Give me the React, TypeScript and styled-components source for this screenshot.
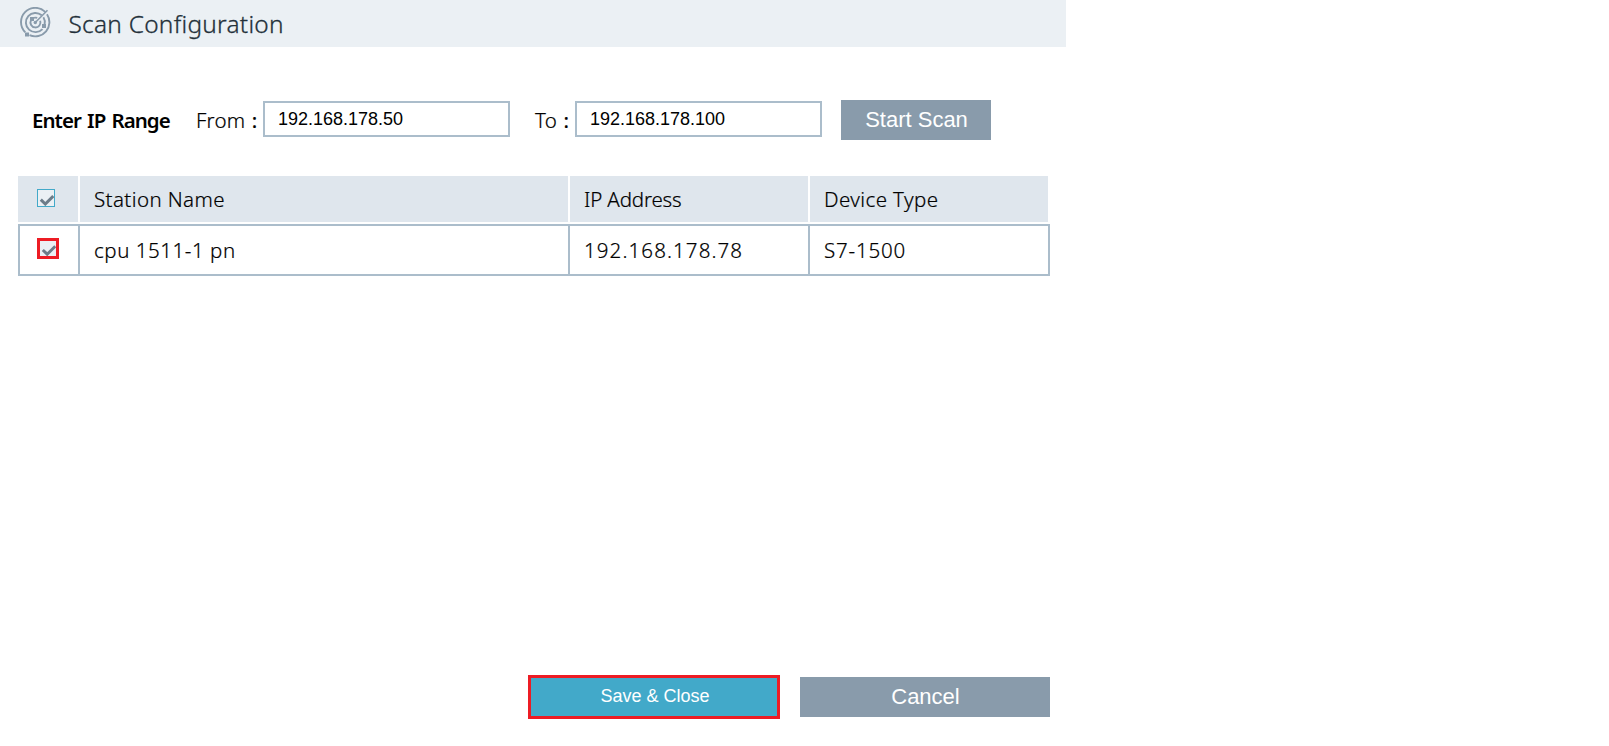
import React from "react";
import styled, { createGlobalStyle, css } from "styled-components";

const GlobalStyle = createGlobalStyle`
  * { box-sizing: border-box; }
  body { margin: 0; background: #fff; font-family: "Noto Sans", "Open Sans", sans-serif; color: #000; }
`;

const Dialog = styled.main`
  width: 1066px;
  height: 746px;
  display: flex;
  flex-direction: column;
`;

const Header = styled.header`
  height: 47px;
  flex: none;
  display: flex;
  align-items: center;
  padding: 0 0 2px 20px;
  gap: 17px;
  background: #ebf0f4;
`;

const Title = styled.h1`
  margin: 0;
  padding: 3px 0 0 0.5px;
  font-size: 24.4px;
  line-height: 34px;
  font-weight: 300;
  -webkit-text-stroke: 0.3px;
  letter-spacing: 0.27px;
  color: #23303a;
  white-space: nowrap;
`;

const RangeForm = styled.form`
  height: 40px;
  flex: none;
  margin-top: 53px;
  padding-left: 32px;
  display: flex;
  align-items: center;
`;

const RangeTitle = styled.strong`
  width: 164px;
  padding-bottom: 1px;
  font-size: 20.5px;
  line-height: 28px;
  font-weight: 600;
  letter-spacing: -0.95px;
  word-spacing: 1.7px;
  white-space: nowrap;
`;

const RangeLabel = styled.label<{ $width: number }>`
  width: ${(p) => p.$width}px;
  padding-bottom: 1px;
  font-size: 20.5px;
  line-height: 28px;
  font-weight: 300;
  -webkit-text-stroke: 0.2px;
  letter-spacing: 0.2px;
  white-space: nowrap;
`;

const Colon = styled.span`
  margin-left: 1px;
  font-weight: 400;
`;

const AddressInput = styled.input<{ $gap: number }>`
  width: 247px;
  height: 36px;
  flex: none;
  margin: 0 ${(p) => p.$gap}px 2px 0;
  padding: 0 13px;
  border: 2px solid #abbdcb;
  border-radius: 0;
  outline: none;
  background: #fff;
  color: #000;
  font: 18px "Liberation Sans", Arial, sans-serif;
`;

const Button = styled.button<{ $width: number; $primary?: boolean }>`
  width: ${(p) => p.$width}px;
  height: 40px;
  border: 0;
  padding: 0 0 0 1px;
  background: #899bab;
  color: #fff;
  font: 22px "Liberation Sans", Arial, sans-serif;
  ${(p) =>
    p.$primary &&
    css`
      height: 44px;
      border: 3px solid #ed1c24;
      background: #42a9c9;
      font-size: 18px;
      padding: 0 0 2px 2px;
    `}
`;

const Table = styled.div`
  margin: 36px 0 0 18px;
  width: 1032px;
`;

const HeadRow = styled.div`
  display: grid;
  grid-template-columns: 60px 488px 238px 238px;
  gap: 2px;
  height: 46px;
  margin-bottom: 2px;
`;

const BodyRow = styled.div`
  display: grid;
  grid-template-columns: 58px 488px 238px 238px;
  gap: 2px;
  height: 52px;
  padding: 2px;
  background: #abbdcb;
`;

const cell = css<{ $track?: number }>`
  display: flex;
  align-items: center;
  padding: 0 0 1px 14px;
  font-size: 20.5px;
  line-height: 28px;
  font-weight: 300;
  -webkit-text-stroke: 0.2px;
  white-space: nowrap;
  letter-spacing: ${(p) => p.$track ?? 0}px;
`;

const HeadCell = styled.div<{ $track?: number }>`
  ${cell}
  background: #dfe6ed;
`;

const BodyCell = styled.div<{ $track?: number }>`
  ${cell}
  background: #fff;
`;

const CheckCell = styled.div<{ $head?: boolean }>`
  display: flex;
  align-items: flex-start;
  padding: ${(p) => (p.$head ? "13px 0 0 19px" : "12px 0 0 17px")};
  background: ${(p) => (p.$head ? "#dfe6ed" : "#fff")};
`;

const Box = styled.span<{ $marked?: boolean }>`
  display: block;
  width: ${(p) => (p.$marked ? 22 : 18)}px;
  height: ${(p) => (p.$marked ? 21 : 18)}px;
  border: ${(p) => (p.$marked ? "3px solid #ed1c24" : "1px solid #42a9c9")};
  background: #ebf0f4;
  svg { display: block; }
`;

const Footer = styled.footer`
  margin: auto 16px 27px auto;
  display: flex;
  align-items: center;
  gap: 20px;
`;

function RadarIcon() {
  return (
    <svg width="31" height="31" viewBox="0 0 31 31" fill="none" stroke="#899bab" strokeWidth="1.9">
      <path d="M25.2 4.9A14.2 14.2 0 1 0 5.3 25.3M9.5 28.2A14.2 14.2 0 0 0 27 7.3" />
      <path d="M21.7 8.2A9.6 9.6 0 1 0 22.5 22.1M24.6 17.5A9.6 9.6 0 0 0 23.4 10.2" />
      <path d="M11 13.2A5 5 0 1 0 20.2 13.8M14 10.8A5 5 0 0 1 17.2 10.9" />
      <path d="M15 15.8L27.5 3.3" strokeWidth="1.6" />
      <g fill="#899bab" stroke="none">
        <circle cx="15.3" cy="15.5" r="1.7" />
        <rect x="10" y="10" width="4" height="4" />
        <rect x="22" y="17" width="4" height="4" />
        <rect x="5" y="25.5" width="4" height="4" />
      </g>
    </svg>
  );
}

function CheckMark({ marked }: { marked?: boolean }) {
  return (
    <svg width="16" height={marked ? 15 : 16} viewBox={marked ? "0 0 16 15" : "0 0 16 16"}>
      <path
        d={marked ? "M2.8 9L7.2 13.2L15.3 5.2" : "M2.8 9.7L7.3 14L15.3 6"}
        fill="none"
        stroke="#6c7c89"
        strokeWidth="3"
      />
    </svg>
  );
}

export default function App() {
  return (
    <>
      <GlobalStyle />
      <Dialog>
        <Header>
          <RadarIcon />
          <Title>Scan Configuration</Title>
        </Header>
        <RangeForm onSubmit={(e) => e.preventDefault()}>
          <RangeTitle>Enter IP Range</RangeTitle>
          <RangeLabel $width={67}>From <Colon>:</Colon></RangeLabel>
          <AddressInput $gap={25} defaultValue="192.168.178.50" />
          <RangeLabel $width={40}>To <Colon>:</Colon></RangeLabel>
          <AddressInput $gap={19} defaultValue="192.168.178.100" />
          <Button $width={150}>Start Scan</Button>
        </RangeForm>
        <Table>
          <HeadRow>
            <CheckCell $head><Box><CheckMark /></Box></CheckCell>
            <HeadCell $track={0.4}>Station Name</HeadCell>
            <HeadCell $track={-0.15}>IP Address</HeadCell>
            <HeadCell $track={0.4}>Device Type</HeadCell>
          </HeadRow>
          <BodyRow>
            <CheckCell><Box $marked><CheckMark marked /></Box></CheckCell>
            <BodyCell $track={0.55}>cpu 1511-1 pn</BodyCell>
            <BodyCell $track={1.1}>192.168.178.78</BodyCell>
            <BodyCell $track={0.8}>S7-1500</BodyCell>
          </BodyRow>
        </Table>
        <Footer>
          <Button $width={252} $primary>Save &amp; Close</Button>
          <Button $width={250}>Cancel</Button>
        </Footer>
      </Dialog>
    </>
  );
}
